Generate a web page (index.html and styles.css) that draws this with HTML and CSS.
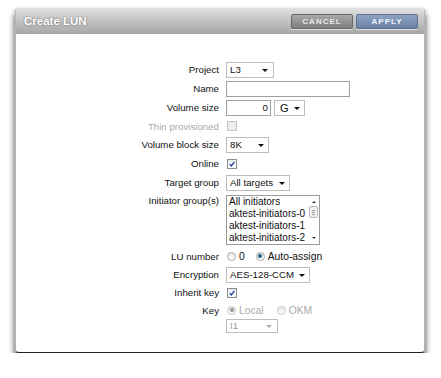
FILE: index.html
```html
<!DOCTYPE html>
<html lang="en">
<head>
    <meta charset="UTF-8">
    <title>Create LUN</title>
    <link rel="stylesheet" href="styles.css">
</head>
<body>
    <div class="dialog">
        <div class="dialog-header">
            <span class="dialog-title">Create LUN</span>
            <div class="header-buttons">
                <button type="button" class="btn btn-cancel">CANCEL</button>
                <button type="button" class="btn btn-apply">APPLY</button>
            </div>
        </div>

        <form class="lun-form">
            <div class="row h19">
                <label>Project</label>
                <div class="field"><div class="select w-project">L3<span class="caret"></span></div></div>
            </div>
            <div class="row h19">
                <label>Name</label>
                <div class="field"><div class="textbox w-name"></div></div>
            </div>
            <div class="row h19">
                <label>Volume size</label>
                <div class="field">
                    <div class="textbox w-size num">0</div>
                    <div class="select w-unit">G<span class="caret"></span></div>
                </div>
            </div>
            <div class="row h18">
                <label class="disabled">Thin provisioned</label>
                <div class="field"><span class="check off"></span></div>
            </div>
            <div class="row h19">
                <label>Volume block size</label>
                <div class="field"><div class="select w-block">8K<span class="caret"></span></div></div>
            </div>
            <div class="row h19">
                <label>Online</label>
                <div class="field"><span class="check"><svg viewBox="0 0 10 10"><path d="M2.2 5.2 L4.2 7.3 L7.9 2.4" /></svg></span></div>
            </div>
            <div class="row h19">
                <label>Target group</label>
                <div class="field"><div class="select w-target">All targets<span class="caret"></span></div></div>
            </div>
            <div class="row list-row">
                <label>Initiator group(s)</label>
                <div class="field top">
                    <div class="listbox">
                        <ul class="list-items">
                            <li>All initiators</li>
                            <li>aktest-initiators-0</li>
                            <li>aktest-initiators-1</li>
                            <li>aktest-initiators-2</li>
                        </ul>
                        <div class="scrollbar">
                            <span class="arrow up"></span>
                            <span class="thumb"><i></i><i></i><i></i></span>
                            <span class="arrow down"></span>
                        </div>
                    </div>
                </div>
            </div>
            <div class="row h18">
                <label>LU number</label>
                <div class="field">
                    <span class="radio"></span><span class="opt">0</span>
                    <span class="radio on gap"></span><span class="opt">Auto-assign</span>
                </div>
            </div>
            <div class="row h19">
                <label>Encryption</label>
                <div class="field"><div class="select w-enc">AES-128-CCM<span class="caret"></span></div></div>
            </div>
            <div class="row h17">
                <label>Inherit key</label>
                <div class="field"><span class="check"><svg viewBox="0 0 10 10"><path d="M2.2 5.2 L4.2 7.3 L7.9 2.4" /></svg></span></div>
            </div>
            <div class="row h18">
                <label>Key</label>
                <div class="field">
                    <span class="radio on dim"></span><span class="opt disabled">Local</span>
                    <span class="radio dim gap-wide"></span><span class="opt disabled">OKM</span>
                </div>
            </div>
            <div class="row h14">
                <label></label>
                <div class="field top"><div class="select w-key">I1<span class="caret"></span></div></div>
            </div>
        </form>
    </div>
</body>
</html>
```

FILE: styles.css
```css
body {
    margin: 0;
    padding: 0;
    background-color: #fff;
    font-family: "Liberation Sans", Arial, sans-serif;
}

.dialog {
    margin: 8px 0 0 15px;
    width: 410px;
    height: 345px;
    box-sizing: border-box;
    background-color: #fff;
    border-left: 1px solid #b8b8b8;
    border-right: 1px solid #b8b8b8;
    border-bottom: 1px solid #222;
    border-radius: 3px 3px 4px 4px;
    box-shadow: 0 6px 7px rgba(0, 0, 0, 0.6), 0 2px 5px rgba(0, 0, 0, 0.25);
}

.dialog-header {
    height: 26px;
    display: flex;
    align-items: center;
    justify-content: space-between;
    padding: 0 6px 0 8px;
    background: linear-gradient(#e2e2e2, #c8c8c8 40%, #a6a6a6);
    border-radius: 3px 3px 0 0;
}

.dialog-title {
    color: #fff;
    font-weight: bold;
    font-size: 11.5px;
    text-shadow: 0 0 2px rgba(0, 0, 0, 0.5);
}

.header-buttons {
    display: flex;
    gap: 3px;
    margin-top: 1px;
}

.btn {
    width: 62px;
    height: 15px;
    padding: 0;
    border: 1px solid #666;
    border-radius: 2px;
    font-family: "Liberation Sans", Arial, sans-serif;
    font-size: 8px;
    font-weight: bold;
    letter-spacing: 1px;
    color: #eee;
    box-shadow: 0 1px 0 rgba(255, 255, 255, 0.6);
}

.btn-cancel {
    background: linear-gradient(#a9a9a9, #7d7d7d);
    color: #e8e8e8;
}

.btn-apply {
    background: linear-gradient(#8ea3c2, #6a82a8);
    border-color: #5c6f8e;
    color: #f2f4f8;
}

.lun-form {
    padding-top: 26px;
}

.row {
    display: grid;
    grid-template-columns: 203px 1fr;
    column-gap: 7px;
    align-items: center;
    font-size: 9.7px;
    color: #111;
}

.row label {
    text-align: right;
}

.h19 { height: 19px; }
.h18 { height: 18px; }
.h17 { height: 17px; }
.h14 { height: 14px; align-items: start; }

.list-row {
    height: 55px;
    align-items: start;
}

.list-row label {
    margin-top: 3px;
}

.disabled {
    color: #aaa;
}

.field {
    display: flex;
    align-items: center;
}

.field.top {
    align-items: flex-start;
}

.select,
.textbox {
    box-sizing: border-box;
    height: 16px;
    border: 1px solid #bdbdbd;
    background-color: #fff;
    font-size: 9.7px;
    line-height: 14px;
    padding: 0 3px;
    position: relative;
    white-space: nowrap;
}

.textbox {
    border-color: #a0a0a0;
}

.caret {
    position: absolute;
    right: 4px;
    top: 6px;
    border-left: 3px solid transparent;
    border-right: 3px solid transparent;
    border-top: 3px solid #111;
}

.w-project { width: 48px; }
.w-project .caret { right: 5px; }
.w-name { width: 124px; }
.w-size { width: 45px; text-align: right; padding-right: 2px; }
.w-unit { width: 31px; margin-left: 3px; padding-left: 5px; font-size: 11px; }
.w-block { width: 43px; }
.w-target { width: 64px; }
.w-enc { width: 84px; }
.w-key { width: 52px; height: 14px; line-height: 12px; color: #999; }
.w-key .caret { border-top-color: #aaa; top: 5px; right: 5px; }

.check {
    box-sizing: border-box;
    width: 10px;
    height: 10px;
    border: 1px solid #8c8c8c;
    background: linear-gradient(#eaeaea, #fff);
    display: inline-block;
    margin-left: 1px;
}

.check svg {
    display: block;
    width: 8px;
    height: 8px;
    fill: none;
    stroke: #2a3fa0;
    stroke-width: 1.7;
}

.check.off {
    border-color: #c6c6c6;
    background: #eee;
}

.radio {
    box-sizing: border-box;
    width: 9px;
    height: 9px;
    border: 1px solid #a8a8a8;
    border-radius: 50%;
    background: linear-gradient(#e4e4e4, #fff);
    display: inline-block;
    margin-left: 1px;
    position: relative;
}

.radio.on::after {
    content: "";
    position: absolute;
    left: 1.5px;
    top: 1.5px;
    width: 4px;
    height: 4px;
    border-radius: 50%;
    background: #1d5f8a;
}

.radio.dim {
    border-color: #c8c8c8;
}

.radio.dim.on::after {
    background: #9a9a9a;
}

.radio.gap { margin-left: 11px; }
.radio.gap-wide { margin-left: 13px; }

.opt {
    margin-left: 3px;
    font-size: 10.3px;
}

.listbox {
    box-sizing: border-box;
    margin-top: 3px;
    width: 94px;
    height: 50px;
    border: 1px solid #9a9a9a;
    display: flex;
    background-color: #fff;
    overflow: hidden;
}

.list-items {
    list-style: none;
    margin: 0;
    padding: 0 0 0 2px;
    flex: 1;
    font-size: 10px;
    line-height: 12px;
    white-space: nowrap;
    overflow: hidden;
}

.scrollbar {
    width: 11px;
    display: flex;
    flex-direction: column;
    align-items: center;
    padding-top: 2px;
}

.arrow {
    display: block;
    width: 0;
    height: 0;
    border-left: 2px solid transparent;
    border-right: 2px solid transparent;
    margin: 3px 0;
}

.arrow.up { border-bottom: 2px solid #333; }
.arrow.down { border-top: 2px solid #333; margin-top: auto; margin-bottom: 5px; }

.thumb {
    box-sizing: border-box;
    width: 9px;
    height: 12px;
    border: 1px solid #b8b8b8;
    border-radius: 2px;
    background: #f0f0f0;
    display: flex;
    flex-direction: column;
    justify-content: center;
    gap: 1px;
    padding: 0 2px;
}

.thumb i {
    display: block;
    height: 1px;
    background: #999;
}
```
